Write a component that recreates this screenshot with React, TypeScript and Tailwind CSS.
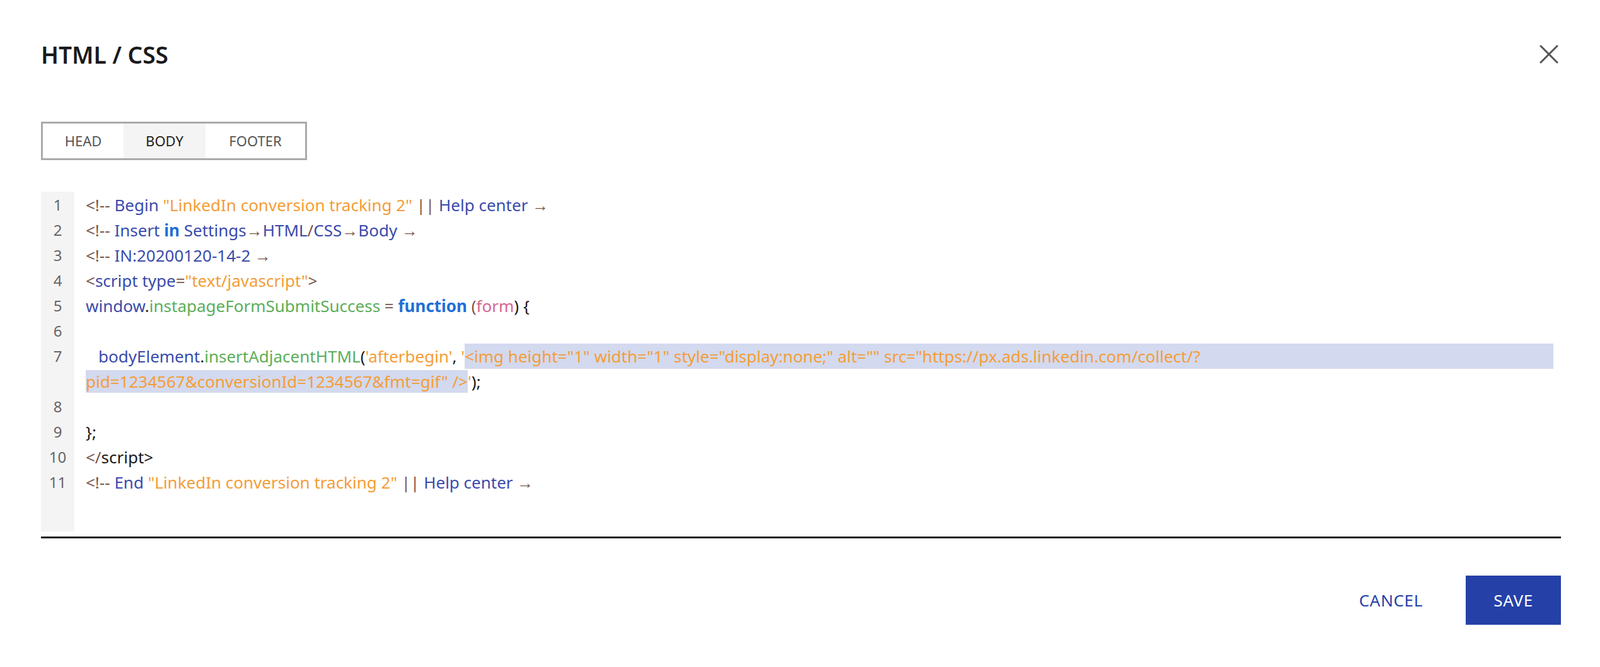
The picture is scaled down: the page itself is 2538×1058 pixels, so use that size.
import React from 'react';

const C = {
  br: 'text-[#7a5548]',
  bl: 'text-[#3a4bab]',
  or: 'text-[#f49d37]',
  gr: 'text-[#5cae58]',
  kw: 'text-[#1f6fd6] font-bold',
  pk: 'text-[#d5668f]',
  tx: 'text-[#1a1a1a]',
};

function S({ c, children }: { c: keyof typeof C; children: React.ReactNode }) {
  return <span className={C[c]}>{children}</span>;
}

const rows: { n: string; content: React.ReactNode }[] = [
  {
    n: '1',
    content: (
      <>
        <S c="br">&lt;!-- </S><S c="bl">Begin </S><S c="or">"LinkedIn conversion tracking 2" </S>
        <S c="br">|| </S><S c="bl">Help center </S><S c="br">→</S>
      </>
    ),
  },
  {
    n: '2',
    content: (
      <>
        <S c="br">&lt;!-- </S><S c="bl">Insert </S><S c="kw">in</S><S c="bl"> Settings</S><S c="br">→</S>
        <S c="bl">HTML</S><S c="br">/</S><S c="bl">CSS</S><S c="br">→</S><S c="bl">Body </S><S c="br">→</S>
      </>
    ),
  },
  {
    n: '3',
    content: (
      <>
        <S c="br">&lt;!-- </S><S c="bl">IN:20200120-14-2 </S><S c="br">→</S>
      </>
    ),
  },
  {
    n: '4',
    content: (
      <>
        <S c="br">&lt;</S><S c="bl">script type</S><S c="br">=</S><S c="or">"text/javascript"</S><S c="br">&gt;</S>
      </>
    ),
  },
  {
    n: '5',
    content: (
      <>
        <S c="bl">window</S><S c="tx">.</S><S c="gr">instapageFormSubmitSuccess</S><S c="br"> = </S>
        <S c="kw">function</S><S c="tx"> </S><S c="br">(</S><S c="pk">form</S><S c="tx">) {'{'}</S>
      </>
    ),
  },
  { n: '6', content: null },
  {
    n: '7',
    content: (
      <div className="flex">
        <span className="pl-[20px]">
          <S c="bl">bodyElement</S><S c="tx">.</S><S c="gr">insertAdjacentHTML</S><S c="tx">(</S>
          <S c="or">'afterbegin'</S><S c="tx">, </S><S c="or">'</S>
        </span>
        <span className="flex-1 bg-[#d3d9ee] text-[#f49d37]">
          &lt;img height="1" width="1" style="display:none;" alt="" src="https://px.ads.linkedin.com/collect/?
        </span>
      </div>
    ),
  },
  {
    n: '',
    content: (
      <>
        <span className="bg-[#d3d9ee] text-[#f49d37]">pid=1234567&amp;conversionId=1234567&amp;fmt=gif" /&gt;</span>
        <S c="or">'</S><S c="tx">);</S>
      </>
    ),
  },
  { n: '8', content: null },
  { n: '9', content: <S c="tx">{'};'}</S> },
  {
    n: '10',
    content: (
      <>
        <S c="br">&lt;/</S><S c="tx">script&gt;</S>
      </>
    ),
  },
  {
    n: '11',
    content: (
      <>
        <S c="br">&lt;!-- </S><S c="bl">End </S><S c="or">"LinkedIn conversion tracking 2" </S>
        <S c="br">|| </S><S c="bl">Help center </S><S c="br">→</S>
      </>
    ),
  },
];

export default function App() {
  return (
    <div className="min-h-screen bg-white pl-[65px] pr-[62px] font-['Inter',sans-serif]">
      <div className="flex items-center justify-between pt-[62px] h-[110px]">
        <h1 className="text-[37px] font-semibold text-[#1a1a1a] leading-none">HTML / CSS</h1>
        <button className="mr-[4px] text-[#555]">
          <svg width="30" height="30" viewBox="0 0 30 30" stroke="currentColor" strokeWidth="3" strokeLinecap="round">
            <line x1="2" y1="2" x2="28" y2="28" />
            <line x1="28" y1="2" x2="2" y2="28" />
          </svg>
        </button>
      </div>

      <div className="mt-[83px] inline-flex h-[61px] border-[3px] border-[#aaaaaa] text-[22px]">
        <div className="w-[128px] flex items-center justify-center text-[#555]">HEAD</div>
        <div className="w-[130px] flex items-center justify-center bg-[#f4f4f4] text-[#222]">BODY</div>
        <div className="w-[158px] flex items-center justify-center text-[#555]">FOOTER</div>
      </div>

      <div className="mt-[50px] flex text-[26px] leading-[40px]">
        <div className="w-[53px] bg-[#f4f4f4] pt-[1px] pb-[58px] text-[#666] text-[24px] shrink-0">
          {rows.map((r, i) => (
            <div key={i} className="h-[40px] text-center">{r.n}</div>
          ))}
        </div>
        <div className="flex-1 pl-[18px] pr-[12px] pt-[1px] whitespace-pre">
          {rows.map((r, i) => (
            <div key={i} className="h-[40px]">{r.content}</div>
          ))}
        </div>
      </div>

      <div className="mt-[8px] border-t-[3px] border-[#1a1a1a]" />

      <div className="mt-[59px] flex justify-end items-center gap-[68px]">
        <button className="text-[26px] text-[#2541a8] font-['Liberation_Sans',sans-serif] tracking-wide">CANCEL</button>
        <button className="w-[151px] h-[78px] bg-[#2541a8] text-white text-[26px] font-['Liberation_Sans',sans-serif] tracking-wide">
          SAVE
        </button>
      </div>
    </div>
  );
}
